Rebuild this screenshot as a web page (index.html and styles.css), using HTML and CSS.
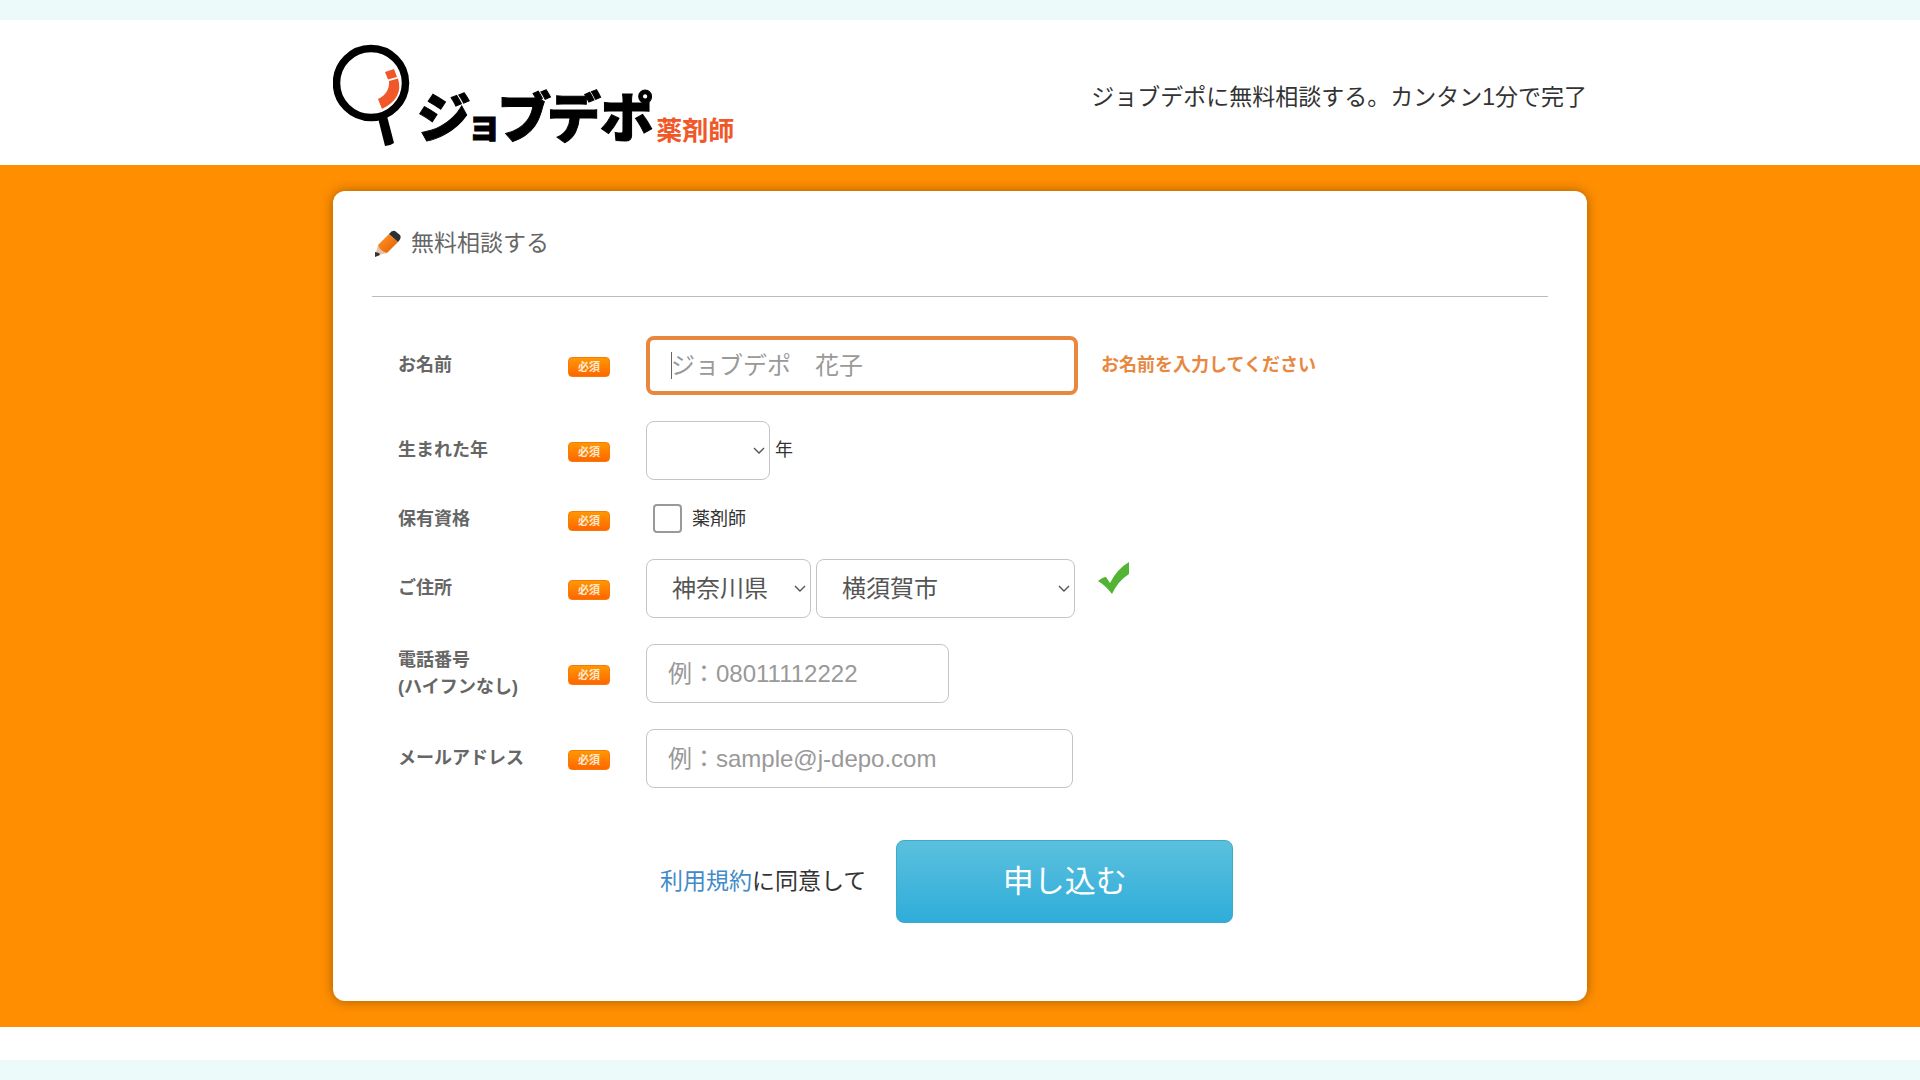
FILE: index.html
```html
<!DOCTYPE html>
<html lang="ja">
<head>
<meta charset="utf-8">
<meta name="viewport" content="width=device-width, initial-scale=1">
<title>ジョブデポ薬剤師</title>
<link rel="stylesheet" href="styles.css">
</head>
<body>
<header class="header">
  <div class="header-inner">
    <a class="logo" href="#">
      <svg class="logo-mark" viewBox="0 0 78 102" aria-hidden="true">
        <circle cx="38" cy="39" r="34.5" fill="none" stroke="#000" stroke-width="7.5"/>
        <path d="M45 74 L54 72 L61 99 Q57 102 52 102 Z" fill="#000"/>
        <path d="M52 28 L61 25 L64 33 L55 35.500 Z" fill="#f0582a"/>
        <path d="M56 37 L65 34.500 Q71 54 49 65 L45 55 Q57 49 56 37 Z" fill="#f0582a"/>
      </svg>
      <span class="logo-name">ジ<span class="logo-small">ョ</span>ブデポ</span>
      <span class="logo-sub">薬剤師</span>
    </a>
    <p class="tagline">ジョブデポに無料相談する。カンタン1分で完了</p>
  </div>
</header>
<main class="main">
  <form class="card" action="#">
    <h1 class="title">
      <svg class="pencil" viewBox="0 0 32 32" aria-hidden="true">
        <defs>
          <linearGradient id="wood" x1="0" y1="0" x2="1" y2="1">
            <stop offset="0" stop-color="#ff9a3c"/><stop offset="0.5" stop-color="#f47a12"/><stop offset="1" stop-color="#d85c05"/>
          </linearGradient>
        </defs>
        <path d="M3 29 L6 18 L15 26 Z" fill="#e3c4ab"/>
        <path d="M3 25 L7 26 L8 28 L3 30 Z" fill="#333"/>
        <path d="M6 18 L17 7 L26 15 L15 26 Q8 24 6 18 Z" fill="url(#wood)"/>
        <path d="M17 7 Q20 3 23 4 L28 8 Q30 11 26 15 Z" fill="#2b2e33"/>
      </svg>
      無料相談する
    </h1>
    <div class="rows">
      <div class="row">
        <label class="label" for="name">お名前</label>
        <span class="badge">必須</span>
        <div class="field">
          <span class="focus-box"><input class="control control-name" id="name" type="text" placeholder="ジョブデポ　花子"><span class="caret"></span></span>
          <span class="error">お名前を入力してください</span>
        </div>
      </div>
      <div class="row">
        <label class="label" for="year">生まれた年</label>
        <span class="badge">必須</span>
        <div class="field">
          <select class="control select select-year" id="year"><option></option></select>
          <span class="unit">年</span>
        </div>
      </div>
      <div class="row row-short">
        <span class="label">保有資格</span>
        <span class="badge">必須</span>
        <div class="field">
          <label class="check"><input class="checkbox" type="checkbox">薬剤師</label>
        </div>
      </div>
      <div class="row">
        <label class="label" for="pref">ご住所</label>
        <span class="badge">必須</span>
        <div class="field">
          <select class="control select select-pref" id="pref"><option>神奈川県</option></select>
          <select class="control select select-city" aria-label="市区町村"><option>横須賀市</option></select>
          <svg class="ok" viewBox="0 0 32 32" aria-hidden="true">
            <path d="M0 19 Q5 15 8 15 L12 21 Q19 7 31 0 L31 12 Q20 19 14 32 Q8 24 0 19 Z" fill="#52b435"/>
          </svg>
        </div>
      </div>
      <div class="row">
        <label class="label" for="tel">電話番号<br>(ハイフンなし)</label>
        <span class="badge">必須</span>
        <div class="field">
          <input class="control control-tel" id="tel" type="tel" placeholder="例：08011112222">
        </div>
      </div>
      <div class="row">
        <label class="label" for="mail">メールアドレス</label>
        <span class="badge">必須</span>
        <div class="field">
          <input class="control control-mail" id="mail" type="email" placeholder="例：sample@j-depo.com">
        </div>
      </div>
    </div>
    <div class="actions">
      <p class="agree"><a class="terms" href="#">利用規約</a>に同意して</p>
      <button class="submit" type="submit">申し込む</button>
    </div>
  </form>
</main>
<footer class="footer"></footer>
</body>
</html>
```
FILE: styles.css
```css
* { box-sizing: border-box; }

body {
  margin: 0;
  padding: 20px 0;
  background: #ecfaf9;
  color: #333;
  font-family: "Liberation Sans", "Noto Sans CJK JP", sans-serif;
  font-size: 18px;
  line-height: 27px;
}

.header { background: #fff; }

.header-inner {
  display: flex;
  justify-content: space-between;
  align-items: center;
  max-width: 1254px;
  margin: 0 auto;
  padding: 24px 0 19px;
}

.logo {
  display: flex;
  align-items: flex-end;
  color: #000;
  text-decoration: none;
}

.logo-mark {
  width: 78px;
  height: 102px;
}

.logo-name {
  margin-left: 6px;
  font-family: "Noto Sans CJK JP", sans-serif;
  font-size: 54px;
  font-weight: 900;
  line-height: 48px;
  font-feature-settings: "palt";
  -webkit-text-stroke: 1px #000;
}

.logo-small { font-size: 36px; }

.logo-sub {
  margin-left: 4px;
  color: #f0582a;
  font-size: 26px;
  font-weight: 700;
  line-height: 30px;
}

.tagline {
  margin: 0;
  padding-top: 4px;
  font-size: 23px;
  line-height: 32px;
}

.main {
  padding: 26px 0;
  background: #ff8e00;
}

.card {
  max-width: 1254px;
  margin: 0 auto;
  padding: 32px 39px 78px;
  border-radius: 12px;
  background: #fff;
  box-shadow: 0 0 12px rgba(0, 0, 0, 0.35);
}

.title {
  display: flex;
  align-items: center;
  gap: 7px;
  margin: 0;
  padding-bottom: 33px;
  border-bottom: 1px solid #bbb;
  color: #666;
  font-size: 23px;
  font-weight: 400;
  line-height: 40px;
}

.pencil {
  width: 32px;
  height: 32px;
}

.rows { padding: 26px 0 0 26px; }

.row {
  display: grid;
  grid-template-columns: 170px 78px 1fr;
  align-items: center;
  height: 85px;
}

.row-short { height: 53px; }

.label {
  color: #666;
  font-weight: 700;
}

.badge {
  width: 42px;
  height: 20px;
  margin-top: 2px;
  border: 1px solid #f57c0a;
  border-radius: 4px;
  background: linear-gradient(#ff9800, #ff6600);
  color: #ffe9d2;
  font-size: 11px;
  font-weight: 700;
  line-height: 18px;
  text-align: center;
}

.field {
  display: flex;
  align-items: center;
}

.control {
  height: 59px;
  padding: 0 21px;
  border: 1px solid #c4c4c4;
  border-radius: 8px;
  background: #fff;
  color: #555;
  font: inherit;
  font-size: 24px;
}

.control::placeholder {
  color: #999;
  opacity: 1;
}

.focus-box {
  position: relative;
  display: flex;
}

.control-name {
  width: 432px;
  border: 4px solid #e8883f;
}

.caret {
  position: absolute;
  top: 16px;
  left: 25px;
  width: 1px;
  height: 27px;
  background: #666;
}

.control-tel { width: 303px; }
.control-mail { width: 427px; }

.select {
  padding: 0 25px;
  appearance: none;
  background: #fff url("data:image/svg+xml,%3Csvg xmlns='http://www.w3.org/2000/svg' width='12' height='8'%3E%3Cpath d='M1 1l5 5 5-5' fill='none' stroke='%23555' stroke-width='1.4'/%3E%3C/svg%3E") no-repeat right 4px center;
}

.select-year { width: 124px; }
.select-pref { width: 165px; }

.select-city {
  width: 259px;
  margin-left: 5px;
}

.error {
  margin-left: 23px;
  color: #e8883f;
  font-weight: 700;
}

.unit { margin-left: 5px; }

.check {
  display: flex;
  align-items: center;
  gap: 10px;
  padding-left: 7px;
}

.checkbox {
  width: 29px;
  height: 29px;
  margin: 0 0 2px;
  appearance: none;
  border: 2px solid #999;
  border-radius: 4px;
  background: #fff;
}

.ok {
  width: 32px;
  height: 32px;
  margin: 0 0 22px 23px;
}

.actions {
  display: flex;
  align-items: center;
  gap: 30px;
  padding: 39px 0 0 288px;
}

.agree {
  margin: 0;
  font-size: 23px;
}

.terms {
  color: #428bca;
  text-decoration: none;
}

.submit {
  width: 337px;
  height: 83px;
  border: 1px solid #3fa9c8;
  border-radius: 8px;
  background: linear-gradient(#5bc0de, #2fadd9);
  color: #fff;
  font: inherit;
  font-size: 31px;
}

.footer {
  height: 33px;
  background: #fff;
}
```
